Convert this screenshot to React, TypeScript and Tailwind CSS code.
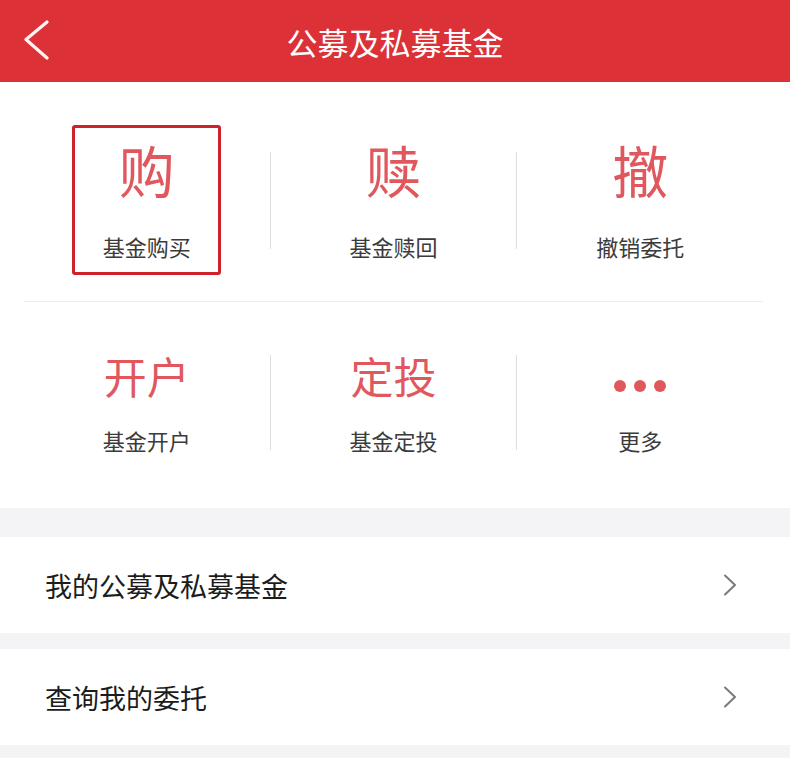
import { FC } from 'react';

type Entry = {
  big: string;
  label: string;
  active?: boolean;
  dots?: boolean;
};

const topRow: Entry[] = [
  { big: '购', label: '基金购买', active: true },
  { big: '赎', label: '基金赎回' },
  { big: '撤', label: '撤销委托' },
];

const bottomRow: Entry[] = [
  { big: '开户', label: '基金开户' },
  { big: '定投', label: '基金定投' },
  { big: '', label: '更多', dots: true },
];

const font = { fontFamily: '"Noto Sans CJK SC", "Noto Sans", sans-serif' };

const Divider: FC<{ h: string }> = ({ h }) => <div className={`w-px shrink-0 bg-[#dedede] ${h}`} />;

const TopCell: FC<{ item: Entry }> = ({ item }) => (
  <div className="flex flex-1 justify-center">
    <div
      className={`flex h-[150px] w-[149px] flex-col items-center justify-center rounded-[3px] border-[3px] pb-[2px] ${
        item.active ? 'border-[#cf2129]' : 'border-transparent'
      }`}
    >
      <span className="text-[56px] leading-none text-[#e0585d]">{item.big}</span>
      <span className="mt-[38px] text-[22px] leading-none text-[#3b3b3b]">{item.label}</span>
    </div>
  </div>
);

const BottomCell: FC<{ item: Entry }> = ({ item }) => (
  <div className="flex flex-1 flex-col items-center">
    {item.dots ? (
      <div className="flex h-[43px] items-end gap-[8px] pb-[5px]">
        <span className="h-[12px] w-[12px] rounded-full bg-[#e0585d]" />
        <span className="h-[12px] w-[12px] rounded-full bg-[#e0585d]" />
        <span className="h-[12px] w-[12px] rounded-full bg-[#e0585d]" />
      </div>
    ) : (
      <span className="text-[43px] leading-none text-[#e0585d]">{item.big}</span>
    )}
    <span className="mt-[32px] text-[22px] leading-none text-[#3b3b3b]">{item.label}</span>
  </div>
);

const ListRow: FC<{ title: string }> = ({ title }) => (
  <div className="flex h-[96px] items-center justify-between bg-white pl-[45px] pr-[53px]">
    <span className="text-[27px] leading-none text-[#1c1c1c]">{title}</span>
    <svg width="14" height="22" viewBox="0 0 14 22" fill="none">
      <polyline points="2,1.5 12,11 2,20.5" stroke="#7a7a7a" strokeWidth="2" strokeLinecap="round" strokeLinejoin="round" />
    </svg>
  </div>
);

const App: FC = () => {
  return (
    <div className="min-h-[758px] w-[790px] bg-[#f4f3f6]" style={font}>
      <div className="grid h-[82px] grid-cols-[1fr_auto_1fr] items-center bg-[#dc3136]">
        <div className="pl-[23px]">
          <svg width="28" height="42" viewBox="0 0 28 42" fill="none">
            <polyline points="24,2 3,19.5 24,38" stroke="#fff3f3" strokeWidth="3.2" strokeLinecap="round" strokeLinejoin="round" />
          </svg>
        </div>
        <h1 className="text-[31px] leading-none text-white">公募及私募基金</h1>
        <div />
      </div>

      <div className="bg-white pl-[24px] pr-[27px]">
        <div className="flex items-center border-b border-[#ececec] pb-[26px] pt-[43px]">
          <TopCell item={topRow[0]} />
          <Divider h="h-[97px]" />
          <TopCell item={topRow[1]} />
          <Divider h="h-[97px]" />
          <TopCell item={topRow[2]} />
        </div>
        <div className="flex items-center pb-[57px] pt-[52px]">
          <BottomCell item={bottomRow[0]} />
          <Divider h="h-[95px]" />
          <BottomCell item={bottomRow[1]} />
          <Divider h="h-[95px]" />
          <BottomCell item={bottomRow[2]} />
        </div>
      </div>

      <div className="h-[29px]" />
      <ListRow title="我的公募及私募基金" />
      <div className="h-[16px]" />
      <ListRow title="查询我的委托" />
    </div>
  );
};

export default App;
